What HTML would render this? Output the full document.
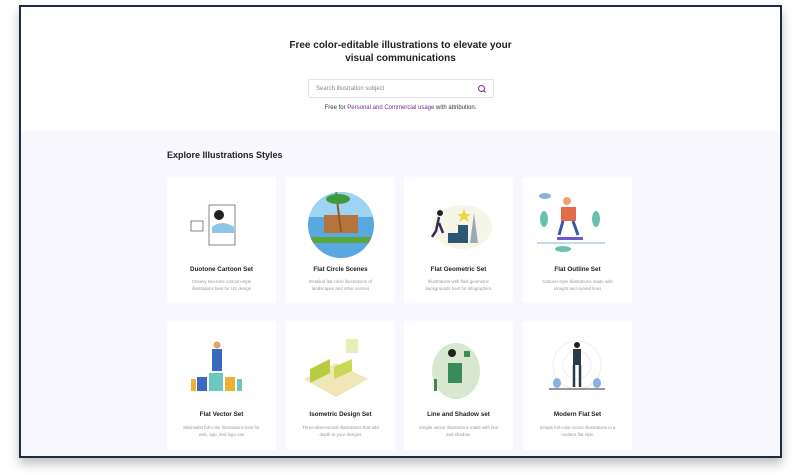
<!DOCTYPE html>
<html><head><style>
*{margin:0;padding:0;box-sizing:border-box}
body{width:800px;height:475px;background:#fff;font-family:"Liberation Sans",sans-serif;position:relative;overflow:hidden}
.frame{position:absolute;left:19px;top:5px;width:763px;height:453px;border:2px solid #1f2a44;background:#f7f7fd;box-shadow:0 6px 10px rgba(0,0,0,.25)}
.top{position:absolute;left:0;top:0;width:759px;height:124px;background:#fff}
h1{position:absolute;left:0;width:759px;top:32px;text-align:center;font-size:10px;line-height:13px;color:#222;font-weight:bold}
.search{position:absolute;left:287px;top:72px;width:186px;height:19px;border:1px solid #e3e3e8;border-radius:2px;font-size:6px;color:#888;padding:6px 7px}
.search svg{position:absolute;right:6px;top:4px}
.free{position:absolute;left:0;width:759px;top:98px;text-align:center;font-size:6px;color:#333}
.free span{color:#7a2a8a}
h2{position:absolute;left:146px;top:143px;font-size:9px;color:#222}
.card{position:absolute;width:109px;background:#fff;border-radius:2px;text-align:center}
.card b{position:absolute;left:0;right:0;font-size:6.3px;color:#222}
.card p{position:absolute;left:14px;right:14px;font-size:4.4px;line-height:7px;color:#999}
.card svg{position:absolute;left:0;top:0}
</style></head><body>
<div class="frame">
<div class="top">
<h1>Free color-editable illustrations to elevate your<br>visual communications</h1>
<div class="search">Search illustration subject<svg width="10" height="10"><circle cx="4.5" cy="4.5" r="3" fill="none" stroke="#7a2a8a" stroke-width="1"/><line x1="6.5" y1="6.5" x2="8.5" y2="8.5" stroke="#7a2a8a"/></svg></div>
<div class="free">Free for <span>Personal and Commercial usage</span> with attribution.</div>
</div>
<h2>Explore Illustrations Styles</h2>

<div class="card" style="left:146px;top:170px;height:126px"><svg width="109" height="90"><rect x="42" y="28" width="26" height="40" fill="#fff" stroke="#333" stroke-width=".6"/><path d="M45 50 q10 -8 22 0 l0 6 -22 0z" fill="#8ec6ea"/><circle cx="52" cy="38" r="5" fill="#222"/><rect x="24" y="44" width="12" height="10" fill="none" stroke="#333" stroke-width=".6"/></svg><b style="top:89px">Duotone Cartoon Set</b><p style="top:101px">Cheeky two-tone cartoon-style illustrations best for UX design</p></div>
<div class="card" style="left:265px;top:170px;height:126px"><svg width="109" height="90"><defs><clipPath id="c"><circle cx="55" cy="48" r="33"/></clipPath></defs><circle cx="55" cy="48" r="33" fill="#5aa8e0"/><g clip-path="url(#c)"><rect x="20" y="15" width="70" height="25" fill="#9fd3f3"/><rect x="38" y="38" width="34" height="18" fill="#b7743a"/><path d="M50 15 l5 40" stroke="#8a5a2a" stroke-width="2"/><ellipse cx="52" cy="22" rx="12" ry="5" fill="#3e9a3a"/><rect x="25" y="60" width="60" height="6" fill="#5aa63a"/></g></svg><b style="top:89px">Flat Circle Scenes</b><p style="top:101px">Detailed flat circle illustrations of landscapes and other scenes</p></div>
<div class="card" style="left:383px;top:170px;height:126px"><svg width="109" height="90"><ellipse cx="58" cy="50" rx="30" ry="22" fill="#f5f5e8"/><path d="M44 66 v-10 h10 v-8 h10 v18z" fill="#2f5575"/><polygon points="60,32 62,37 67,37 63,40 65,45 60,42 55,45 57,40 53,37 58,37" fill="#f2d34a"/><path d="M74 66 l-4 -30 -4 30z" fill="#a0a8b8"/><circle cx="36" cy="36" r="3" fill="#222"/><path d="M35 40 l-3 14 -4 6 M35 46 l4 10" stroke="#3a2a5a" stroke-width="2.5" fill="none"/></svg><b style="top:89px">Flat Geometric Set</b><p style="top:101px">Illustrations with fluid geometric backgrounds best for infographics</p></div>
<div class="card" style="left:502px;top:170px;height:126px"><svg width="109" height="90"><circle cx="44" cy="24" r="4" fill="#f0a070"/><rect x="38" y="30" width="15" height="14" fill="#e36a4a"/><path d="M40 44 l-4 14 M50 44 l5 14" stroke="#3a5aa8" stroke-width="3"/><rect x="34" y="60" width="26" height="3" fill="#6a5acd"/><ellipse cx="21" cy="42" rx="4" ry="8" fill="#6ac0b0"/><ellipse cx="73" cy="42" rx="4" ry="8" fill="#6ac0b0"/><line x1="14" y1="66" x2="82" y2="66" stroke="#8ab0e0"/><ellipse cx="22" cy="19" rx="6" ry="3" fill="#8ab0e0"/><ellipse cx="40" cy="72" rx="8" ry="3" fill="#6ac0b0"/></svg><b style="top:89px">Flat Outline Set</b><p style="top:101px">Cartoon-style illustrations made with straight and curved lines</p></div>

<div class="card" style="left:146px;top:314px;height:129px"><svg width="109" height="90"><rect x="45" y="28" width="10" height="22" fill="#3a6ac0"/><circle cx="50" cy="24" r="3.5" fill="#e0a070"/><rect x="30" y="56" width="10" height="14" fill="#3a6ac0"/><rect x="42" y="52" width="14" height="18" fill="#6ac8c0"/><rect x="58" y="56" width="10" height="14" fill="#f0b030"/><rect x="24" y="58" width="5" height="12" fill="#f0b030"/><rect x="70" y="58" width="5" height="12" fill="#6ac8c0"/></svg><b style="top:90px">Flat Vector Set</b><p style="top:103px">Minimalist full-color illustrations best for web, app, and logo use</p></div>
<div class="card" style="left:265px;top:314px;height:129px"><svg width="109" height="90"><polygon points="18,58 50,42 82,58 50,76" fill="#f0e6b8"/><polygon points="24,48 44,38 44,52 24,62" fill="#b8cc40"/><polygon points="48,46 66,38 66,50 48,58" fill="#c8d858"/><rect x="60" y="18" width="12" height="14" fill="#e8f0b8"/></svg><b style="top:90px">Isometric Design Set</b><p style="top:103px">Three-dimensional illustrations that add depth to your designs</p></div>
<div class="card" style="left:383px;top:314px;height:129px"><svg width="109" height="90"><ellipse cx="52" cy="50" rx="24" ry="28" fill="#d8e8d0"/><rect x="44" y="42" width="14" height="20" fill="#3a8a5a"/><circle cx="48" cy="32" r="4" fill="#222"/><rect x="60" y="30" width="6" height="6" fill="#3a8a5a"/><rect x="30" y="58" width="3" height="12" fill="#3a8a5a"/></svg><b style="top:90px">Line and Shadow set</b><p style="top:103px">Simple vector illustrations made with line and shadow.</p></div>
<div class="card" style="left:502px;top:314px;height:129px"><svg width="109" height="90"><circle cx="54" cy="44" r="24" fill="none" stroke="#eee"/><circle cx="54" cy="44" r="14" fill="none" stroke="#eee"/><circle cx="54" cy="24" r="3" fill="#222"/><rect x="50" y="28" width="8" height="16" fill="#2a3a4a"/><path d="M51 44 v22 M57 44 v22" stroke="#2a3a4a" stroke-width="2.5"/><ellipse cx="34" cy="62" rx="4" ry="5" fill="#8ab0e0"/><ellipse cx="74" cy="62" rx="4" ry="5" fill="#8ab0e0"/><line x1="26" y1="68" x2="82" y2="68" stroke="#333"/></svg><b style="top:90px">Modern Flat Set</b><p style="top:103px">Simple full-color vector illustrations in a modern flat style</p></div>
</div>
</body></html>
